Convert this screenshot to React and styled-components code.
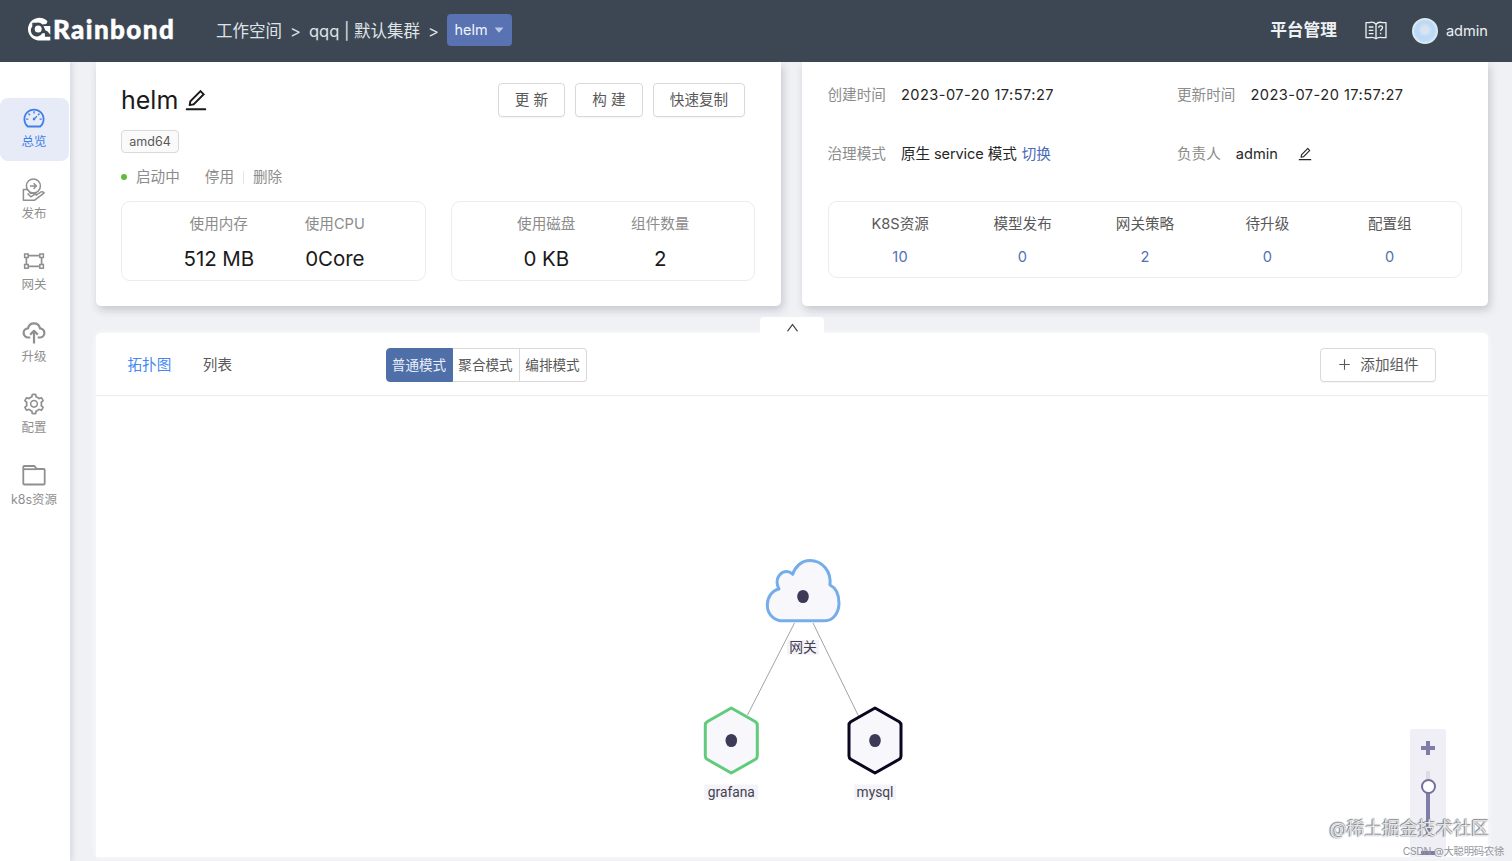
import React, { useState } from "react";
import styled, { createGlobalStyle } from "styled-components";
import {
  AiFillCaretDown,
  AiOutlineDashboard,
  AiOutlineEdit,
  AiOutlineGateway,
  AiOutlinePlus,
  AiOutlineSetting,
  AiOutlineUp,
} from "react-icons/ai";

const PublishIcon = () => (
  <svg width="24" height="24" viewBox="0 0 24 24" fill="none" stroke="currentColor" strokeWidth="1.5" strokeLinejoin="round">
    <circle cx="11.400" cy="8" r="7" />
    <path d="M8 8h6.400M11.600 5.200 14.400 8l-2.800 2.800" />
    <path
      d="M1.400 22.300V11.600h3.400c1.300.3 2.400 1.700 3.400 3.600h3.600c2 0 2.600 1 2.400 2l4.600-3.200c1.200-.5 2.700-.2 3.400.9l-9.800 7.400z"
      fill="#fff"
    />
    <path d="M5.600 15.400l3.200 3.400 5-3.200" />
  </svg>
);

const UpgradeIcon = () => (
  <svg width="24" height="24" viewBox="0 0 24 24" fill="none" stroke="currentColor" strokeWidth="2.200" strokeLinejoin="round">
    <path d="M8.300 16.500H6.300a4.600 4.600 0 0 1-.2-9.200 6 6 0 0 1 11.800 0 4.600 4.600 0 0 1-.2 9.200h-2" />
    <path d="M12 22.500V9.800M8.200 13.600 12 9.800l3.800 3.800" />
  </svg>
);

const FolderIcon = () => (
  <svg width="24" height="24" viewBox="0 0 24 24" fill="none" stroke="currentColor" strokeWidth="1.800" strokeLinejoin="round">
    <path d="M1.300 5.500V3c0-.6.400-1 1-1h10.200l2.200 3h7c.6 0 1 .4 1 1v13.500c0 .6-.4 1-1 1H2.300c-.6 0-1-.4-1-1z" />
    <path d="M1.300 5.200h13.400" />
  </svg>
);

const BookIcon = () => (
  <svg width="22" height="19" viewBox="0 0 22 19" fill="none" stroke="currentColor" strokeWidth="1.300" strokeLinejoin="round">
    <path d="M11 3.200C9.600 1.500 7.600 1.200 6.400 1.200c-1 0-1.600.3-2 .5H1v15h3.500c2.600-.6 4.800-.2 6.500 1.100 1.700-1.300 3.900-1.700 6.500-1.100H21v-15h-3.400c-2.400-.8-4.900-.4-6.600 1.500z" />
    <path d="M11 3.200v14M3.800 6h4.600M3.800 9.300h4.600M3.800 12.600h4.600" />
    <path d="M13.700 6.800c0-1.100.8-1.900 1.900-1.900s1.900.8 1.900 1.800c0 1.500-1.900 1.500-1.900 3.300M15.600 11.800v1.400" />
  </svg>
);

const LogoMark = () => (
  <svg width="26" height="24" viewBox="0 0 26 24">
    <path
      d="M21.500 4.200A11.400 11.400 0 1 0 12 23.500h12.300v-3.700h-5.400v-3.600h-2.700a6 6 0 1 1-9.900-6.600V5.800h4.200a6.200 6.200 0 0 1 6 1.700l3.800-.6z"
      fill="#fff"
    />
    <circle cx="12.200" cy="12" r="3.500" fill="#fff" />
    <path d="M17.500 9h6.800v8.700l-2.600-3.200-2.400-1.200z" fill="#fff" />
  </svg>
);

const menu = [
  { label: "总览", icon: <AiOutlineDashboard size={24} /> },
  { label: "发布", icon: <PublishIcon /> },
  { label: "网关", icon: <AiOutlineGateway size={24} /> },
  { label: "升级", icon: <UpgradeIcon /> },
  { label: "配置", icon: <AiOutlineSetting size={24} /> },
  { label: "k8s资源", icon: <FolderIcon /> },
];

const counts = [
  { label: "K8S资源", value: 10 },
  { label: "模型发布", value: 0 },
  { label: "网关策略", value: 2 },
  { label: "待升级", value: 0 },
  { label: "配置组", value: 0 },
];

const modes = ["普通模式", "聚合模式", "编排模式"];

const HexNode = ({ x, y, color, name, labelWidth }) => (
  <g transform={`translate(${x} ${y})`}>
    <path
      d="M0-32.500 24.200-18.800Q26-17.500 26-15.500V15.500Q26 17.500 24.200 18.800L0 32.500-24.200 18.800Q-26 17.500-26 15.500V-15.500Q-26-17.500-24.200-18.800Z"
      fill="#f8f8fc"
      stroke={color}
      strokeWidth="3"
      strokeLinejoin="round"
    />
    <ellipse rx="5.800" ry="6.600" fill="#3d3a57" />
    <rect x={-labelWidth / 2} y="44" width={labelWidth} height="15" fill="#f3f3f8" />
    <NodeLabel y="56">{name}</NodeLabel>
  </g>
);

const Topology = () => (
  <TopologySvg viewBox="0 0 1392 461">
    <path d="M698.500 227 651.500 319M717 227l45.500 93" stroke="#a3a3a8" strokeWidth="1" fill="none" />
    <path
      d="M684 224.700C676 223.200 671.300 216.700 671.300 209 671.300 201 676 194.500 683 193 680.500 189 680.700 184 682 181.500 685 175 692 173.500 696.700 178.300 699.500 170 706 164.500 714 164.500 726 164.500 735.500 175 734 189 740 192 743 199 743 207 743 217 737 224.700 729 224.700Z"
      fill="#f8f8fc"
      stroke="#74adea"
      strokeWidth="3"
      strokeLinejoin="round"
    />
    <ellipse cx="707" cy="200.500" rx="5.800" ry="6.600" fill="#3d3a57" />
    <rect x="691" y="244" width="32" height="15" fill="#f3f3f8" />
    <NodeLabel x="707" y="256">网关</NodeLabel>
    <HexNode x={635.3} y={344.5} color="#61cb7c" name="grafana" labelWidth={54} />
    <HexNode x={779} y={344.5} color="#08071f" name="mysql" labelWidth={42} />
  </TopologySvg>
);

const App = () => {
  const [activeMenu, setActiveMenu] = useState("总览");
  const [tab, setTab] = useState("拓扑图");
  const [mode, setMode] = useState("普通模式");

  return (
    <>
      <GlobalStyle />
      <Page>
        <Header>
          <Logo>
            <LogoMark />
            <LogoText>Rainbond</LogoText>
          </Logo>
          <Breadcrumb>
            <span>工作空间</span>
            <Separator>&gt;</Separator>
            <span>qqq | 默认集群</span>
            <Separator>&gt;</Separator>
            <AppSelect>
              helm <AiFillCaretDown size={12} />
            </AppSelect>
          </Breadcrumb>
          <UserArea>
            <Platform>平台管理</Platform>
            <BookIcon />
            <User>
              <Avatar />
              admin
            </User>
          </UserArea>
        </Header>
        <Body>
          <Sidebar>
            {menu.map((item) => (
              <MenuItem key={item.label} $active={activeMenu === item.label} onClick={() => setActiveMenu(item.label)}>
                {item.icon}
                <MenuLabel>{item.label}</MenuLabel>
              </MenuItem>
            ))}
          </Sidebar>
          <Main>
            <Cards>
              <Card>
                <TitleRow>
                  <Title>
                    helm <AiOutlineEdit size={26} />
                  </Title>
                  <Actions>
                    <Button $width="67px">更 新</Button>
                    <Button $width="68px">构 建</Button>
                    <Button $width="92px">快速复制</Button>
                  </Actions>
                </TitleRow>
                <Tag>amd64</Tag>
                <StatusRow>
                  <Dot />
                  <Status>启动中</Status>
                  <span>停用</span>
                  <Divider />
                  <span>删除</span>
                </StatusRow>
                <StatBoxes>
                  <StatBox>
                    <Stat $width="116px">
                      <StatLabel>使用内存</StatLabel>
                      <StatValue>512 MB</StatValue>
                    </Stat>
                    <Stat $width="116px">
                      <StatLabel>使用CPU</StatLabel>
                      <StatValue>0Core</StatValue>
                    </Stat>
                  </StatBox>
                  <StatBox>
                    <Stat $width="114px">
                      <StatLabel>使用磁盘</StatLabel>
                      <StatValue>0 KB</StatValue>
                    </Stat>
                    <Stat $width="114px">
                      <StatLabel>组件数量</StatLabel>
                      <StatValue>2</StatValue>
                    </Stat>
                  </StatBox>
                </StatBoxes>
              </Card>
              <Card>
                <InfoGrid>
                  <InfoItem>
                    <InfoLabel>创建时间</InfoLabel>
                    <DateText>2023-07-20 17:57:27</DateText>
                  </InfoItem>
                  <InfoItem>
                    <InfoLabel>更新时间</InfoLabel>
                    <DateText>2023-07-20 17:57:27</DateText>
                  </InfoItem>
                  <InfoItem>
                    <InfoLabel>治理模式</InfoLabel>
                    <Governance>原生 service 模式</Governance>
                    <Link>切换</Link>
                  </InfoItem>
                  <InfoItem>
                    <InfoLabel>负责人</InfoLabel>
                    <Owner>admin</Owner>
                    <AiOutlineEdit size={16} />
                  </InfoItem>
                </InfoGrid>
                <CountBox>
                  {counts.map((item) => (
                    <Count key={item.label}>
                      <span>{item.label}</span>
                      <CountValue>{item.value}</CountValue>
                    </Count>
                  ))}
                </CountBox>
              </Card>
            </Cards>
            <CollapseButton>
              <AiOutlineUp size={15} />
            </CollapseButton>
            <Panel>
              <PanelHeader>
                <Tabs>
                  {["拓扑图", "列表"].map((name) => (
                    <Tab key={name} $active={tab === name} onClick={() => setTab(name)}>
                      {name}
                    </Tab>
                  ))}
                </Tabs>
                <ModeGroup>
                  {modes.map((name) => (
                    <ModeButton key={name} $active={mode === name} onClick={() => setMode(name)}>
                      {name}
                    </ModeButton>
                  ))}
                </ModeGroup>
                <AddButton $width="116px">
                  <AiOutlinePlus size={15} />
                  添加组件
                </AddButton>
              </PanelHeader>
              <Canvas>
                <Topology />
                <ZoomControl>
                  <ZoomPlus />
                  <ZoomTrack>
                    <ZoomThumb />
                  </ZoomTrack>
                  <ZoomMinus />
                </ZoomControl>
              </Canvas>
            </Panel>
          </Main>
        </Body>
        <Watermark>@稀土掘金技术社区</Watermark>
        <Credit>CSDN @大聪明码农徐</Credit>
      </Page>
    </>
  );
};

const GlobalStyle = createGlobalStyle`
  * {
    box-sizing: border-box;
  }
  body {
    margin: 0;
    font-family: Inter, "Noto Sans CJK SC", sans-serif;
    font-size: 14.6px;
    line-height: 20px;
    color: #262626;
    overflow: hidden;
  }
  button {
    font-family: inherit;
    line-height: inherit;
    padding: 0;
    cursor: pointer;
  }
  svg {
    flex-shrink: 0;
  }
`;

const Page = styled.div`
  position: relative;
  width: 1512px;
  height: 861px;
  display: flex;
  flex-direction: column;
  background: #f0f1f5;
  overflow: hidden;
  white-space: nowrap;
`;

const Header = styled.header`
  height: 62px;
  flex-shrink: 0;
  display: flex;
  align-items: center;
  padding: 0 24px 1px 26px;
  background: #3d4753;
  color: #eef1f4;
  z-index: 2;
`;

const Logo = styled.div`
  width: 190px;
  display: flex;
  align-items: center;
  padding-bottom: 3px;
`;

const LogoText = styled.span`
  font-family: Lato, sans-serif;
  font-weight: 900;
  font-size: 26px;
  line-height: 28px;
  letter-spacing: 1.4px;
  -webkit-text-stroke: 0.5px #fff;
  color: #fff;
  margin: 0 0 0 1px;
`;

const Breadcrumb = styled.nav`
  display: flex;
  align-items: center;
  font-size: 16.5px;
  color: #dfe3e8;
`;

const Separator = styled.span`
  width: 27px;
  text-align: center;
`;

const AppSelect = styled.button`
  width: 65px;
  height: 32px;
  display: flex;
  align-items: center;
  justify-content: center;
  gap: 5px;
  margin-bottom: 1px;
  border: none;
  border-radius: 4px;
  background: #5872b2;
  color: #f2f5fb;
  font-size: 14.4px;
  svg {
    color: #b9c8e4;
  }
`;

const UserArea = styled.div`
  margin-left: auto;
  display: flex;
  align-items: center;
`;

const Platform = styled.span`
  font-size: 16.7px;
  font-weight: 700;
  margin: 0 28px 1px 0;
`;

const User = styled.div`
  display: flex;
  align-items: center;
  gap: 8px;
  margin-left: 25px;
`;

const Avatar = styled.span`
  width: 26px;
  height: 26px;
  margin-top: 1px;
  border-radius: 50%;
  border: 2px solid #dde7ef;
  background: radial-gradient(circle at 50% 45%, #dbe3f0 0 20%, #b9d9f7 45%, #c5e0f9 100%);
`;

const Body = styled.div`
  flex: 1;
  display: flex;
  min-height: 0;
`;

const Sidebar = styled.aside`
  width: 70px;
  flex-shrink: 0;
  padding-top: 36px;
  display: flex;
  flex-direction: column;
  gap: 8.5px;
  background: #fff;
  box-shadow: 2px 0 6px rgba(30, 40, 60, 0.14);
`;

const MenuItem = styled.div`
  width: 69px;
  height: 63px;
  display: flex;
  flex-direction: column;
  align-items: center;
  padding: 8px 1px 0 0;
  border-radius: 8px;
  cursor: pointer;
  background: ${(props) => (props.$active ? "#e6ebf7" : "transparent")};
  color: ${(props) => (props.$active ? "#3f7fe8" : "#8f8f8f")};
`;

const MenuLabel = styled.span`
  font-size: 12.5px;
  line-height: 18px;
  margin-top: 3px;
`;

const Main = styled.main`
  flex: 1;
  display: flex;
  flex-direction: column;
  padding: 0 24px 4px 26px;
  min-width: 0;
`;

const Cards = styled.section`
  display: grid;
  grid-template-columns: 685px 686px;
  gap: 21px;
`;

const Card = styled.div`
  height: 244px;
  padding: 21px 26px 0 25px;
  border-radius: 0 0 5px 5px;
  background: #fff;
  box-shadow: 2px 4px 9px rgba(30, 35, 50, 0.2);
`;

const TitleRow = styled.div`
  display: flex;
  justify-content: space-between;
  height: 34px;
  padding-right: 10px;
`;

const Title = styled.h1`
  display: flex;
  align-items: center;
  gap: 5px;
  margin: 0;
  font-size: 25px;
  font-weight: 400;
  color: #1a1a1a;
`;

const Actions = styled.div`
  display: flex;
  gap: 10px;
`;

const Button = styled.button`
  width: ${(props) => props.$width};
  height: 34px;
  display: flex;
  align-items: center;
  justify-content: center;
  padding-bottom: 1px;
  background: #fff;
  border: 1px solid #d9d9d9;
  border-radius: 4px;
  box-shadow: 0 1px 1px rgba(0, 0, 0, 0.04);
  font-size: 14.6px;
  color: #595959;
`;

const AddButton = styled(Button)`
  margin-left: auto;
  padding-bottom: 0;
  gap: 8px;
`;

const Tag = styled.span`
  display: flex;
  align-items: center;
  justify-content: center;
  width: 58px;
  height: 23px;
  margin-top: 13px;
  border: 1px solid #d9d9d9;
  border-radius: 4px;
  background: #fafafa;
  color: #595959;
  font-size: 12.5px;
`;

const StatusRow = styled.div`
  display: flex;
  align-items: center;
  height: 22px;
  margin-top: 13px;
  color: #8c8c8c;
`;

const Dot = styled.span`
  width: 6px;
  height: 6px;
  margin-right: 9px;
  border-radius: 50%;
  background: #62bb3f;
`;

const Status = styled.span`
  margin-right: 25px;
`;

const Divider = styled.span`
  width: 1px;
  height: 13px;
  margin: 0 9px;
  background: #e6e6e6;
`;

const StatBoxes = styled.div`
  display: flex;
  gap: 25px;
  margin-top: 13px;
`;

const StatBox = styled.div`
  width: 305px;
  height: 80px;
  display: flex;
  justify-content: center;
  padding: 12px 0 0 7px;
  border: 1px solid #ececec;
  border-radius: 9px;
  & + & {
    padding-left: 1px;
  }
`;

const Stat = styled.div`
  width: ${(props) => props.$width};
  display: flex;
  flex-direction: column;
  align-items: center;
`;

const StatLabel = styled.span`
  color: #8c8c8c;
`;

const StatValue = styled.span`
  font-size: 20.5px;
  line-height: 28px;
  margin-top: 11px;
  letter-spacing: -0.1px;
  color: #1a1a1a;
`;

const InfoGrid = styled.div`
  display: grid;
  grid-template-columns: 349.5px 1fr;
  row-gap: 37px;
  height: 118px;
  align-content: start;
  padding: 1px 0 0 0.5px;
`;

const InfoItem = styled.div`
  display: flex;
  align-items: center;
  height: 22px;
`;

const InfoLabel = styled.span`
  margin-right: 15px;
  color: #8c8c8c;
`;

const DateText = styled.span`
  font-size: 14.6px;
  letter-spacing: 0.47px;
`;

const Governance = styled.span`
  letter-spacing: -0.1px;
`;

const Link = styled.a`
  margin-left: 5px;
  color: #4a6bb5;
`;

const Owner = styled.span`
  margin-right: 19px;
`;

const CountBox = styled.div`
  width: 634px;
  height: 77px;
  display: flex;
  padding: 12px 10px 0;
  margin-left: 1px;
  border: 1px solid #ececec;
  border-radius: 9px;
`;

const Count = styled.div`
  flex: 1;
  display: flex;
  flex-direction: column;
  align-items: center;
  color: #595959;
`;

const CountValue = styled.a`
  margin-top: 13px;
  letter-spacing: 0.3px;
  color: #5470b5;
`;

const CollapseButton = styled.div`
  width: 64px;
  height: 16px;
  margin: 11px auto 0;
  display: flex;
  justify-content: center;
  padding-top: 3px;
  border-radius: 4px 4px 0 0;
  background: #fff;
  color: #444;
  z-index: 1;
`;

const Panel = styled.section`
  flex: 1;
  display: flex;
  flex-direction: column;
  border-radius: 5px 5px 0 0;
  background: #fff;
  box-shadow: 0 0 5px rgba(255, 255, 255, 0.9);
`;

const PanelHeader = styled.div`
  height: 63px;
  flex-shrink: 0;
  display: flex;
  align-items: center;
  padding: 1px 52px 0 31.5px;
  border-bottom: 1px solid #ececee;
`;

const Tabs = styled.div`
  width: 258px;
  display: flex;
  gap: 31.5px;
`;

const Tab = styled.span`
  cursor: pointer;
  color: ${(props) => (props.$active ? "#4489f0" : "#595959")};
`;

const ModeGroup = styled.div`
  display: flex;
`;

const ModeButton = styled.button`
  width: 67px;
  height: 34px;
  border: 1px solid ${(props) => (props.$active ? "#4f6fa9" : "#d9d9d9")};
  font-size: 13.6px;
  padding-top: 1px;
  background: ${(props) => (props.$active ? "#4f6fa9" : "#fff")};
  color: ${(props) => (props.$active ? "#e9eef7" : "#595959")};
  & + & {
    border-left: none;
  }
  &:first-child {
    border-radius: 4px 0 0 4px;
  }
  &:last-child {
    border-radius: 0 4px 4px 0;
  }
`;

const Canvas = styled.div`
  position: relative;
  flex: 1;
  overflow: hidden;
`;

const TopologySvg = styled.svg`
  display: block;
  width: 1392px;
  height: 461px;
`;

const NodeLabel = styled.text`
  font-family: Roboto, "Noto Sans CJK SC", sans-serif;
  font-size: 13.8px;
  text-anchor: middle;
  fill: #45424f;
`;

/* floats over the topology canvas */
const ZoomControl = styled.div`
  position: absolute;
  right: 42px;
  bottom: 0;
  width: 36px;
  height: 128px;
  display: flex;
  flex-direction: column;
  align-items: center;
  padding-top: 12px;
  border-radius: 2px 2px 0 0;
  background: #efeff5;
`;

const ZoomPlus = styled.div`
  width: 14px;
  height: 14px;
  background: linear-gradient(#807da8, #807da8) center / 14px 4px no-repeat,
    linear-gradient(#807da8, #807da8) center / 4px 14px no-repeat;
`;

const ZoomTrack = styled.div`
  width: 4px;
  height: 65px;
  margin-top: 16px;
  display: flex;
  justify-content: center;
  padding-top: 8px;
  background: linear-gradient(#dcdce5 14px, #807da8 14px);
`;

const ZoomThumb = styled.div`
  width: 15px;
  height: 15px;
  flex-shrink: 0;
  border: 2px solid #73709d;
  border-radius: 50%;
  background: #fff;
`;

const ZoomMinus = styled.div`
  width: 14px;
  height: 4px;
  margin-top: 15px;
  background: #807da8;
`;

const Watermark = styled.div`
  position: absolute;
  right: 23px;
  bottom: 19px;
  font-size: 17.8px;
  line-height: 26px;
  color: #e4e4e6;
  text-shadow: -1px 0 1px #777, 0 -1px 1px #888;
  z-index: 3;
`;

const Credit = styled.div`
  position: absolute;
  right: 8px;
  bottom: 1px;
  font-size: 10.4px;
  line-height: 16px;
  letter-spacing: -0.3px;
  color: #96969b;
  z-index: 3;
`;

export default App;
